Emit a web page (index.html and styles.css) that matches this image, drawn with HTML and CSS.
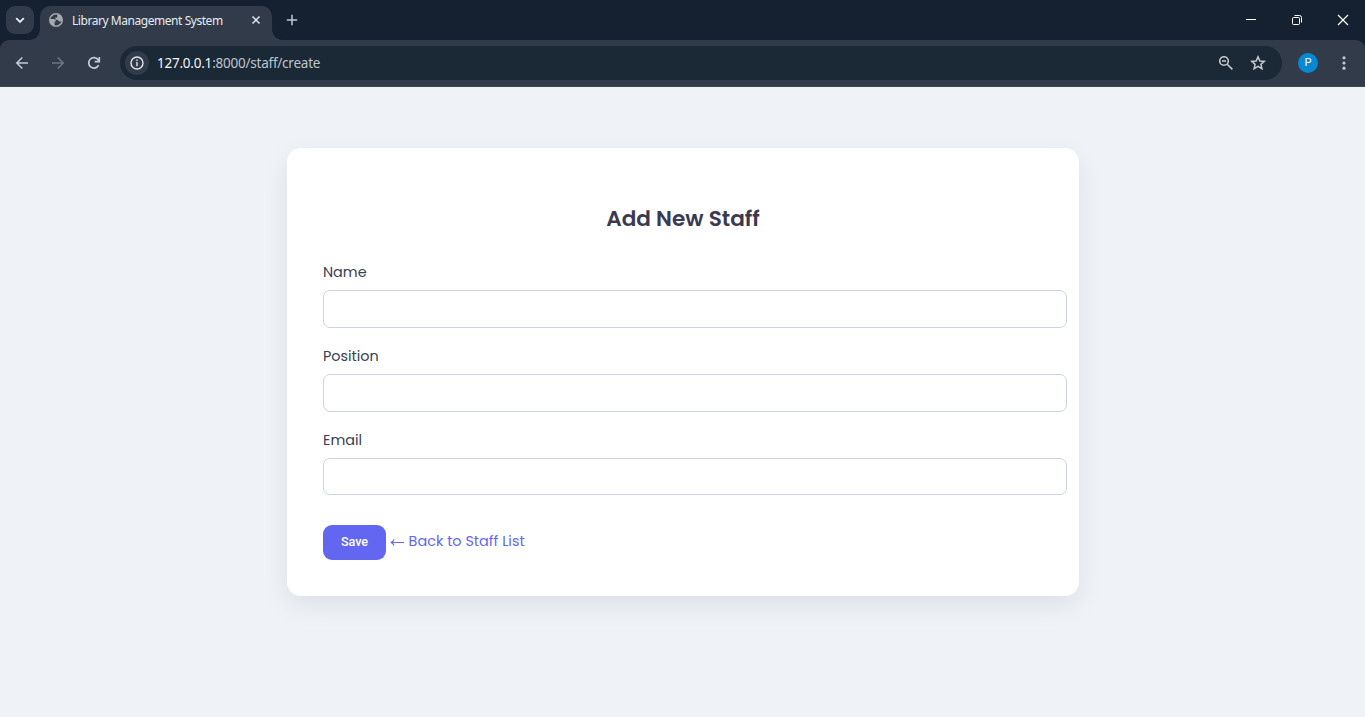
FILE: index.html
```html
<!DOCTYPE html>
<html lang="en">
<head>
<meta charset="utf-8">
<title>Library Management System</title>
<link rel="stylesheet" href="styles.css">
</head>
<body>
<header class="browser">
  <div class="tabstrip">
    <div class="tab-search"><svg width="28" height="28" viewBox="0 0 28 28"><path d="M10.2 12.2l3.8 3.8 3.8-3.8" fill="none" stroke="#e8edf4" stroke-width="1.8"/></svg></div>
    <div class="tab">
      <svg class="favicon" width="14" height="14" viewBox="0 0 14 14"><circle cx="7" cy="7" r="7" fill="#a6a9ad"/><path d="M8.300 1.600C5.500 .9 2.300 2.600 1.500 5.900L4.700 6.100C6.100 6.300 6.900 7.200 6.900 8.600H5.600V12.300C8.600 12.900 11.600 11.200 12.400 8.200L11 8.400C9.500 8.600 9.200 6.700 7.900 6.700H6.400V4.600H8.300Z" fill="#343d4b"/></svg>
      <span class="tab-title">Library Management System</span>
      <svg class="tab-close" width="10" height="10" viewBox="0 0 10 10"><path d="M1.5 1.5l7 7M8.500 1.5l-7 7" stroke="#e3e8ef" stroke-width="1.5"/></svg>
    </div>
    <svg class="new-tab" width="12" height="12" viewBox="0 0 12 12"><path d="M6 .8v10.400M.8 6h10.400" stroke="#bcc8d8" stroke-width="1.500"/></svg>
    <div class="window-controls">
      <svg width="46" height="40" viewBox="0 0 46 40"><path d="M19 19.500h10" stroke="#fff"/></svg>
      <svg width="46" height="40" viewBox="0 0 46 40" fill="none" stroke="#fff"><rect x="19.500" y="17.500" width="7" height="7" rx="1"/><path d="M21.500 15.500h5a2 2 0 0 1 2 2v5"/></svg>
      <svg width="46" height="40" viewBox="0 0 46 40"><path d="M19 15l10 10M29 15l-10 10" stroke="#fff" stroke-width="1.200"/></svg>
    </div>
  </div>
  <div class="toolbar">
    <svg class="nav" width="36" height="34" viewBox="0 0 36 34"><path d="M24 17H13M18.300 11.500L12.800 17l5.500 5.500" fill="none" stroke="#bdc9d9" stroke-width="1.600"/></svg>
    <svg class="nav" width="36" height="34" viewBox="0 0 36 34"><path d="M12 17h11M17.700 11.500l5.500 5.500-5.500 5.500" fill="none" stroke="#6d7684" stroke-width="1.600"/></svg>
    <svg class="nav" width="36" height="34" viewBox="0 0 36 34"><path d="M22.600 19.200A5.200 5.200 0 1 1 22.100 13.800L23.300 15.200M23.300 11v4.600h-4.600" fill="none" stroke="#c3cedc" stroke-width="1.700"/></svg>
    <div class="address">
      <span class="site-info"><svg width="24" height="24" viewBox="0 0 24 24"><circle cx="12" cy="12" r="6" fill="none" stroke="#e3e7ec" stroke-width="1.400"/><path d="M12 11v4.200M12 8.500V10" stroke="#e3e7ec" stroke-width="1.400"/></svg></span>
      <span class="url"><b>127.0.0.1</b>:8000/staff/create</span>
      <svg class="zoom" width="16" height="16" viewBox="0 0 16 16" fill="none" stroke="#c6cacf" stroke-width="1.600"><circle cx="6" cy="6" r="4.300"/><path d="M4 6h4M9.200 9.200l5.200 5.200"/></svg>
      <svg class="star" width="16" height="16" viewBox="0 0 16 16"><path d="M8 1.900l1.850 4.100 4.400.400-3.330 2.950 1 4.350L8 11.400l-3.920 2.300 1-4.350L1.750 6.400l4.400-.4z" fill="none" stroke="#c6cacf" stroke-width="1.500"/></svg>
    </div>
    <span class="avatar">P</span>
    <svg class="menu" width="4" height="16" viewBox="0 0 4 16" fill="#c3c9d1"><circle cx="2" cy="2.800" r="1.600"/><circle cx="2" cy="8" r="1.600"/><circle cx="2" cy="13.200" r="1.600"/></svg>
  </div>
</header>
<main class="page">
  <form class="card">
    <h2 class="title">Add New Staff</h2>
    <label class="label" for="name">Name</label>
    <input class="field" id="name" type="text">
    <label class="label" for="position">Position</label>
    <input class="field" id="position" type="text">
    <label class="label" for="email">Email</label>
    <input class="field field-last" id="email" type="email">
    <div class="actions">
      <button class="save" type="button">Save</button>
      <a class="back" href="#"><svg width="14" height="9" viewBox="0 0 14 9"><path d="M14 4.500H1M4 1.500Q3.200 4 .8 4.500 3.200 5 4 7.500" fill="none" stroke="#6366f1" stroke-width="1.100"/></svg><span>Back to Staff List</span></a>
    </div>
  </form>
</main>
</body>
</html>
```
FILE: styles.css
```css
* { box-sizing: border-box; }
body {
  margin: 0;
  height: 717px;
  overflow: hidden;
  background: #eff3f8;
  font-family: Poppins, Inter, "Open Sans", sans-serif;
}
svg { display: block; flex: none; }
.browser {
  height: 87px;
  background: #152130;
  font-family: "Segoe UI", "Noto Sans", sans-serif;
}
.tabstrip { display: flex; align-items: center; height: 40px; padding-left: 6px; }
.tab-search { width: 28px; height: 28px; border-radius: 9px; background: #313b4a; }
.tab {
  position: relative;
  display: flex;
  align-items: center;
  align-self: flex-end;
  width: 232px;
  height: 34px;
  margin-left: 6px;
  padding: 0 11px 6px 9px;
  border-radius: 10px 10px 0 0;
  background: #313b4a;
}
.tab::before, .tab::after {
  content: "";
  position: absolute;
  bottom: 0;
  width: 10px;
  height: 10px;
}
.tab::before { left: -10px; background: radial-gradient(circle at 0 0, transparent 9.5px, #313b4a 10px); }
.tab::after { right: -10px; background: radial-gradient(circle at 100% 0, transparent 9.5px, #313b4a 10px); }
.tab-title {
  margin-left: 9px;
  color: #e6ebf2;
  font-size: 12px;
  line-height: 18px;
  letter-spacing: -0.45px;
  white-space: nowrap;
  padding-top: 2px;
}
.tab-close { margin-left: auto; }
.new-tab { margin-left: 14px; }
.window-controls { display: flex; margin-left: auto; }
.toolbar {
  display: flex;
  align-items: center;
  height: 47px;
  padding: 0 19px 1px 4px;
  border-bottom: 1px solid #414852;
  border-radius: 9px 9px 0 0;
  background: #313b4a;
}
.address {
  display: flex;
  align-items: center;
  width: 1162px;
  height: 34px;
  margin-left: 8px;
  padding: 0 16px 0 5px;
  border-radius: 17px;
  background: #1b2835;
}
.site-info { width: 24px; height: 24px; border-radius: 50%; background: #313b4a; }
.url { margin-left: 8px; color: #bfc5cc; font-size: 13.5px; line-height: 20px; letter-spacing: -0.23px; }
.url b { color: #f4f6f8; font-weight: 400; }
.zoom { margin-left: auto; }
.star { margin-left: 16px; }
.avatar {
  width: 20px;
  height: 20px;
  margin-left: 16px;
  border-radius: 50%;
  background: #0788d3;
  color: #fff;
  font: 400 11px/20px Roboto, sans-serif;
  text-align: center;
}
.menu { margin-left: auto; }
.page { display: flex; justify-content: center; padding-top: 61px; }
.card {
  width: 792px;
  height: 448px;
  margin-left: 1px;
  padding: 55px 36px 36px;
  border-radius: 14px;
  background: #fff;
  box-shadow: 0 9px 27px rgba(0, 0, 0, 0.08);
}
.title {
  margin: 0 0 26px;
  color: #3b3a52;
  font-size: 21.6px;
  font-weight: 600;
  line-height: 32px;
  text-align: center;
}
.label {
  display: block;
  width: max-content;
  margin-bottom: 7px;
  color: #374151;
  font-size: 14.4px;
  line-height: 22px;
}
.field {
  display: block;
  width: 744px;
  height: 38px;
  margin: 0 0 17px;
  border: 1px solid #cbd5e1;
  border-radius: 7px;
  background: #fff;
}
.field-last { height: 37px; margin-bottom: 30px; }
.actions { display: flex; align-items: center; }
.save {
  width: 63px;
  height: 35px;
  padding: 0 0 2px;
  border: 0;
  border-radius: 9px;
  background: #6366f1;
  color: #fff;
  font: 500 12.6px Roboto, sans-serif;
}
.back {
  display: flex;
  align-items: center;
  margin-left: 4px;
  padding-bottom: 4px;
  color: #6366f1;
  font-size: 14.4px;
  line-height: 22px;
  text-decoration: none;
}
.back svg { margin: 3px 4.6px 0 0; }
```
